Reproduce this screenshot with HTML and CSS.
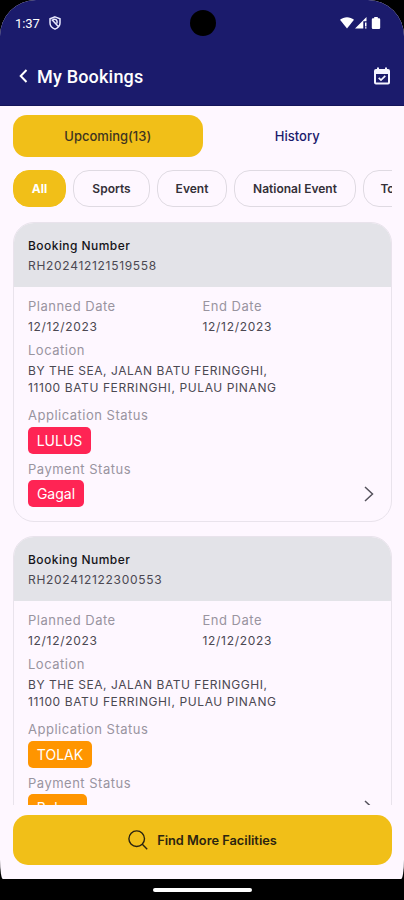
FILE: index.html
```html
<!DOCTYPE html>
<html lang="en">
<head>
<meta charset="utf-8">
<meta name="viewport" content="width=device-width, initial-scale=1">
<title>My Bookings</title>
<link rel="stylesheet" href="styles.css">
</head>
<body>
<div class="device">
  <div class="screen">
    <header class="header">
      <div class="statusbar">
        <span class="time">1:37</span>
        <svg class="shield" width="12" height="14" viewBox="0 0 12 14" fill="none" stroke="#e9e9ff" stroke-width="1.5"><path d="M6 .9 11 2.8V7c0 3-2 5-5 6.1C3 12 1 10 1 7V2.8zM2.800 3.600 9.300 10.600M4 3.500q3-1 4 1.500v2.500"/></svg>
        <span class="camera"></span>
        <svg class="signals" width="42" height="14" viewBox="0 0 42 14" fill="#fff"><path d="M0 3.7C4 .3 10 .3 14 3.7L7 12.5z"/><path d="M15 12.5 26.5 1v4.2h-3.2v7.3zM25 6.5h1.5v4H25zM25 11.2h1.5v1.3H25z"/><path d="M34.2 1h3.6v1.3H39q1.2 0 1.2 1.2v8.3q0 1.2-1.2 1.2h-6q-1.2 0-1.2-1.2V3.500q0-1.200 1.200-1.200h1.200z"/></svg>
      </div>
      <div class="titlebar">
        <svg class="back" width="9" height="14" viewBox="0 0 9 14" fill="none" stroke="#fff" stroke-width="2"><path d="M7.500 1 1.700 7l5.800 6"/></svg>
        <h1>My Bookings</h1>
        <svg class="calendar" width="16" height="18" viewBox="0 0 16 18"><path fill="#f4f4ff" fill-rule="evenodd" d="M3 .5h2V2h6V.5h2V2h1q2 0 2 2v11.500q0 2-2 2H2q-2 0-2-2V4q0-2 2-2h1zM2 7v8.500h12V7z"/><path d="m4.700 10.800 2.300 2.300 4.300-4.200" fill="none" stroke="#f4f4ff" stroke-width="1.700"/></svg>
      </div>
    </header>
    <nav class="tabs">
      <button class="tab tab-active"><span>Upcoming(13)</span></button>
      <button class="tab"><span>History</span></button>
    </nav>
    <div class="chips">
      <button class="chip chip-all">All</button>
      <button class="chip chip-sports">Sports</button>
      <button class="chip chip-event">Event</button>
      <button class="chip chip-national">National Event</button>
      <button class="chip chip-tour">Tournament</button>
    </div>
    <main class="list">
      <article class="card">
        <div class="card-head"><h2>Booking Number</h2><p>RH202412121519558</p></div>
        <div class="card-body">
          <div class="dates">
            <div><p class="label">Planned Date</p><p class="value">12/12/2023</p></div>
            <div><p class="label">End Date</p><p class="value">12/12/2023</p></div>
          </div>
          <p class="label location">Location</p>
          <p class="address">BY THE SEA, JALAN BATU FERINGGHI,<br><span>11100 BATU FERRINGHI, PULAU PINANG</span></p>
          <p class="label application">Application Status</p>
          <span class="badge red">LULUS</span>
          <p class="label payment">Payment Status</p>
          <div class="last-row"><span class="badge red gagal">Gagal</span><svg width="10" height="18" viewBox="0 0 10 18" fill="none" stroke="#55525c" stroke-width="1.500"><path d="m1 2 7.500 7L1 16"/></svg></div>
        </div>
      </article>
      <article class="card">
        <div class="card-head"><h2>Booking Number</h2><p>RH202412122300553</p></div>
        <div class="card-body">
          <div class="dates">
            <div><p class="label">Planned Date</p><p class="value">12/12/2023</p></div>
            <div><p class="label">End Date</p><p class="value">12/12/2023</p></div>
          </div>
          <p class="label location">Location</p>
          <p class="address">BY THE SEA, JALAN BATU FERINGGHI,<br><span>11100 BATU FERRINGHI, PULAU PINANG</span></p>
          <p class="label application">Application Status</p>
          <span class="badge orange">TOLAK</span>
          <p class="label payment">Payment Status</p>
          <div class="last-row"><span class="badge orange pending">Belum</span><svg width="10" height="18" viewBox="0 0 10 18" fill="none" stroke="#55525c" stroke-width="1.500"><path d="m1 2 7.500 7L1 16"/></svg></div>
        </div>
      </article>
    </main>
    <button class="find">
      <svg width="20" height="20" viewBox="0 0 20 20" fill="none" stroke="#2b2410" stroke-width="1.400"><circle cx="8.700" cy="8.700" r="7.800"/><path d="m14.300 14.300 4.900 4.900"/></svg>
      <span>Find More Facilities</span>
    </button>
  </div>
  <div class="gesture"><span></span></div>
</div>
</body>
</html>
```
FILE: styles.css
```css
* { box-sizing: border-box; margin: 0; padding: 0; }
body { background: #000; font-family: Inter, sans-serif; color: #4b4852; }
button { border: 0; background: none; font-family: inherit; }
svg { display: block; flex: none; }
.device { width: 404px; height: 900px; overflow: hidden; background: #000; display: flex; flex-direction: column; }
.screen { height: 879px; background: #fef7ff; border-radius: 36px 36px 3px 3px / 36px 36px 20px 20px; overflow: hidden; display: flex; flex-direction: column; flex: none; }
.header { height: 106px; background: #1b1b6c; color: #fff; flex: none; border-bottom: 1px solid #14145a; font-family: Roboto, sans-serif; }
.statusbar { height: 46px; display: flex; align-items: center; padding: 0 22px 0 15px; position: relative; }
.time { font-size: 13px; letter-spacing: -.1px; width: 34px; }
.camera { position: absolute; left: 190px; top: 10px; width: 26px; height: 26px; border-radius: 50%; background: #000; }
.signals { margin-left: auto; }
.titlebar { height: 60px; display: flex; align-items: center; padding: 0 14px 0 19px; }
.titlebar h1 { font-size: 18px; font-weight: 500; letter-spacing: .2px; margin-left: 9px; }
.calendar { margin-left: auto; }
.tabs { display: grid; grid-template-columns: 1fr 1fr; height: 42px; margin: 9px 12px 0 13px; flex: none; }
.tab { border-radius: 14px; font-size: 13px; letter-spacing: 0; color: #1b1b6c; font-weight: 500; }
.tab-active { background: #f1bf18; color: #3e3420; }
.chips { display: flex; gap: 7px; height: 37px; margin: 13px 12px 0 13px; overflow: hidden; flex: none; }
.chip { flex: none; height: 37px; border: 1px solid #dfdae2; border-radius: 16px; font-size: 12px; font-weight: 600; color: #343038; }
.chip-all { width: 53px; background: #f1bf18; border-color: #f1bf18; color: #fff; font-weight: 700; }
.chip-sports { width: 77px; }
.chip-event { width: 70px; }
.chip-national { width: 122px; }
.chip-tour { width: 105px; }
.list { margin: 15px 12px 0 13px; height: 583px; overflow: hidden; flex: none; }
.card { height: 300px; border: 1px solid #e9e3ec; border-radius: 21px; overflow: hidden; margin-bottom: 14px; }
.card-head { background: #e3e3e8; height: 64px; padding: 13px 14px 0; }
.card-head h2 { font-size: 12px; line-height: 20px; font-weight: 500; letter-spacing: .45px; color: #151419; }
.card-head p { font-size: 12px; line-height: 20px; letter-spacing: .7px; }
.card-body { padding: 9px 14px 0; }
.dates { display: grid; grid-template-columns: 1fr 1fr; }
.label { color: #99949f; font-size: 13px; line-height: 20px; letter-spacing: .5px; }
.value { font-size: 12px; line-height: 20px; letter-spacing: .7px; padding-top: 1px; }
.location { margin-top: 3px; }
.address { font-size: 12px; line-height: 17px; letter-spacing: .53px; margin-top: 2px; white-space: nowrap; }
.address span { letter-spacing: .6px; }
.application { margin-top: 9px; }
.badge { display: block; width: 63px; height: 27px; border-radius: 5px; color: #fff; font-size: 14px; line-height: 27px; text-align: center; margin-top: 2px; }
.red { background: #ff2454; }
.orange { background: #ff9500; }
.payment { margin-top: 5px; }
.last-row { display: flex; align-items: center; justify-content: space-between; margin-top: 1px; padding-right: 3px; }
.last-row .badge { margin: 0; }
.gagal { width: 56px; }
.pending { width: 59px; }
.orange:not(.pending) { width: 64px; }
.find { margin: 10px 12px 0 13px; height: 50px; border-radius: 15px; background: #f1bf18; display: flex; align-items: center; justify-content: center; gap: 9px; font-size: 12.8px; font-weight: 600; color: #2b2410; flex: none; }
.gesture { height: 21px; display: flex; justify-content: center; align-items: center; }
.gesture span { width: 99px; height: 4px; border-radius: 2px; background: #fff; }
```
